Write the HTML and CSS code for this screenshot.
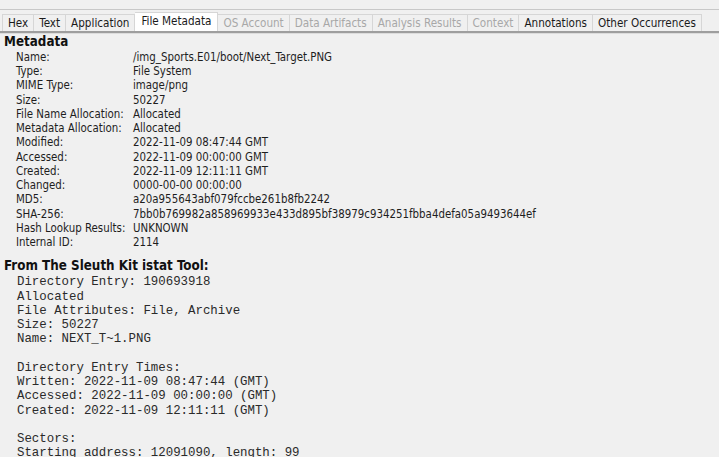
FILE: index.html
```html
<!DOCTYPE html>
<html>
<head>
<meta charset="utf-8">
<link rel="stylesheet" href="styles.css">
</head>
<body>
<div class="topbar"></div>
<div class="tabs">
  <div class="tab">Hex</div>
  <div class="tab">Text</div>
  <div class="tab">Application</div>
  <div class="tab selected">File Metadata</div>
  <div class="tab disabled">OS Account</div>
  <div class="tab disabled">Data Artifacts</div>
  <div class="tab disabled">Analysis Results</div>
  <div class="tab disabled">Context</div>
  <div class="tab">Annotations</div>
  <div class="tab">Other Occurrences</div>
</div>
<div class="content">
  <h1 class="heading">Metadata</h1>
  <div class="meta">
    <div class="label">Name:</div><div class="value">/img_Sports.E01/boot/Next_Target.PNG</div>
    <div class="label">Type:</div><div class="value">File System</div>
    <div class="label">MIME Type:</div><div class="value">image/png</div>
    <div class="label">Size:</div><div class="value">50227</div>
    <div class="label">File Name Allocation:</div><div class="value">Allocated</div>
    <div class="label">Metadata Allocation:</div><div class="value">Allocated</div>
    <div class="label">Modified:</div><div class="value">2022-11-09 08:47:44 GMT</div>
    <div class="label">Accessed:</div><div class="value">2022-11-09 00:00:00 GMT</div>
    <div class="label">Created:</div><div class="value">2022-11-09 12:11:11 GMT</div>
    <div class="label">Changed:</div><div class="value">0000-00-00 00:00:00</div>
    <div class="label">MD5:</div><div class="value">a20a955643abf079fccbe261b8fb2242</div>
    <div class="label">SHA-256:</div><div class="value">7bb0b769982a858969933e433d895bf38979c934251fbba4defa05a9493644ef</div>
    <div class="label">Hash Lookup Results:</div><div class="value">UNKNOWN</div>
    <div class="label">Internal ID:</div><div class="value">2114</div>
  </div>
  <h2 class="heading heading2">From The Sleuth Kit istat Tool:</h2>
<pre class="istat">Directory Entry: 190693918
Allocated
File Attributes: File, Archive
Size: 50227
Name: NEXT_T~1.PNG

Directory Entry Times:
Written: 2022-11-09 08:47:44 (GMT)
Accessed: 2022-11-09 00:00:00 (GMT)
Created: 2022-11-09 12:11:11 (GMT)

Sectors:
Starting address: 12091090, length: 99</pre>
</div>
</body>
</html>
```
FILE: styles.css
```css
html, body {
  margin: 0;
  padding: 0;
  background: #f0f0f0;
  color: #1e1e1e;
  font-family: "DejaVu Sans Condensed", "DejaVu Sans", sans-serif;
  font-stretch: condensed;
  font-size: 11.4px;
  overflow: hidden;
  height: 457px;
}
.topbar {
  height: 9px;
  border-bottom: 1px solid #c8c8c8;
}
.tabs {
  display: flex;
  align-items: flex-end;
  padding: 3px 0 0 2px;
  border-bottom: 2px solid #9e9e9e;
  height: 18px;
  box-shadow: 0 1px 0 #dcdcdc;
}
.tab {
  height: 16px;
  line-height: 16px;
  padding: 0 5px 0 5px;
  border: 1px solid #d6d6d6;
  border-bottom: none;
  border-left: none;
  color: #1a1a1a;
  white-space: nowrap;
  font-size: 11.6px;
}
.tab:first-child {
  border-left: 1px solid #d6d6d6;
}
.tab.selected {
  background: #ffffff;
  height: 18px;
  line-height: 17px;
  padding: 0 6px;
}
.tab.disabled {
  color: #a8a8a8;
}
.content {
  padding: 1px 0 0 4px;
}
.heading {
  margin: 0;
  font-size: 13.3px;
  font-weight: bold;
  line-height: 16px;
  color: #111;
}
.heading2 {
  margin-top: 9px;
}
.meta {
  display: grid;
  grid-template-columns: 117px auto;
  padding-left: 12px;
  line-height: 14.23px;
  margin-top: 0;
}
.istat {
  margin: 1px 0 0 13px;
  font-family: "Liberation Mono", monospace;
  font-size: 12.4px;
  line-height: 14.25px;
  color: #2a2a2a;
}
```
